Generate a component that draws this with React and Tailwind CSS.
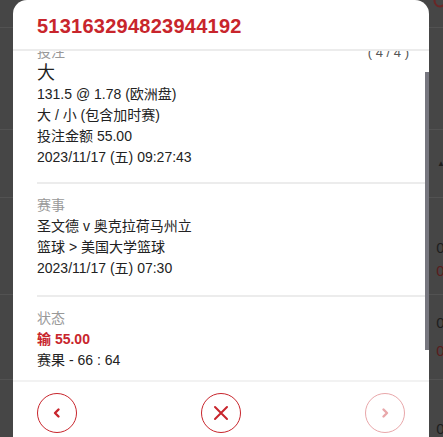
import React from 'react';

const font = { fontFamily: '"Liberation Sans", Arial, "Noto Sans CJK SC", sans-serif' };

function CircleButton({ children, faded }) {
  return (
    <button
      className={`w-10 h-10 rounded-full border border-[#c8252c] flex items-center justify-center text-[#c8252c] ${
        faded ? 'opacity-40' : ''
      }`}
    >
      {children}
    </button>
  );
}

function Section({ label, right, children, last, tight }) {
  return (
    <div
      className={`pt-[11px] ${tight ? 'pb-[14px]' : 'pb-[16px]'} ${last ? '' : 'border-b-2 border-[#ececec]'}`}
    >
      <div className="flex justify-between items-center h-[21px] pr-[16px]">
        <span className="text-[14px] text-[#999]">{label}</span>
        {right && <span className="text-[13px] text-[#555]">{right}</span>}
      </div>
      {children}
    </div>
  );
}

export default function App() {
  return (
    <div className="relative w-[443px] h-[437px] overflow-hidden bg-[#464646]" style={font}>
      {/* Page behind the overlay */}
      <div className="absolute inset-0">
        <div className="h-[28px] border-b border-[#525252] flex justify-end">
          <svg width="18" height="18" viewBox="0 0 18 18" className="-mt-[6px] -mr-[8px]">
            <circle cx="7" cy="7" r="5.5" fill="none" stroke="#6a2626" strokeWidth="2" />
            <path d="M11 11 L16 16" stroke="#6a2626" strokeWidth="2" />
          </svg>
        </div>
        <div className="h-[102px] border-b border-[#525252]" />
        <div className="h-[68px] border-b border-[#525252] flex justify-end items-center">
          <span className="text-[#1e1e1e] text-[8px] mr-[-2px]">▲</span>
        </div>
        <div className="h-[97px] border-b border-[#525252] flex flex-col items-end justify-end pb-[12px] text-[15px] leading-[23px]">
          <span className="text-[#1e1e1e] mr-[-10px]">00</span>
          <span className="text-[#5a1c1c] mr-[-10px]">00</span>
        </div>
        <div className="h-[85px] border-b border-[#525252] flex flex-col items-end justify-center text-[15px] leading-[28px]">
          <span className="text-[#1e1e1e] mr-[-10px]">00</span>
          <span className="text-[#5a1c1c] mr-[-10px]">00</span>
        </div>
        <div className="flex justify-end pt-[38px] text-[15px]">
          <span className="text-[#1e1e1e] mr-[-10px]">00</span>
        </div>
      </div>

      {/* Modal */}
      <div className="absolute left-[13px] top-0 w-[416px] h-[460px] bg-white rounded-t-[14px] flex flex-col">
        <div className="h-[51px] shrink-0 border-b-2 border-[#ececec] flex items-center pl-[24px] pt-[2px]">
          <h1 className="text-[20px] font-bold text-[#c8252c] tracking-[0.25px]">513163294823944192</h1>
        </div>

        {/* Scrollable body */}
        <div className="h-[329px] shrink-0 flex overflow-hidden">
          <div className="flex-1 pl-[24px] -mt-[20px] text-[14px] text-[#222] leading-[21px]">
            <Section label="投注" right="( 4 / 4 )" tight>
              <div className="text-[18px] leading-[21px]">大</div>
              <div>131.5 @ 1.78 (欧洲盘)</div>
              <div>大 / 小 (包含加时赛)</div>
              <div>投注金额 55.00</div>
              <div>2023/11/17 (五) 09:27:43</div>
            </Section>
            <Section label="赛事">
              <div>圣文德 v 奥克拉荷马州立</div>
              <div>篮球 &gt; 美国大学篮球</div>
              <div>2023/11/17 (五) 07:30</div>
            </Section>
            <Section label="状态" last>
              <div className="text-[#c8252c] font-bold">输 55.00</div>
              <div>赛果 - 66 : 64</div>
            </Section>
          </div>
          <div className="w-[4px] pt-[21px] pb-[30px] flex">
            <div className="flex-1 bg-[#76767e]" />
          </div>
        </div>

        {/* Footer */}
        <div className="border-t-2 border-[#f2f2f2] flex justify-between px-[24px] pt-[11px]">
          <CircleButton>
            <svg width="14" height="14" viewBox="0 0 14 14">
              <path d="M8.5 3.5 L5 7 L8.5 10.5" fill="none" stroke="currentColor" strokeWidth="2.4" strokeLinecap="round" strokeLinejoin="round" />
            </svg>
          </CircleButton>
          <CircleButton>
            <svg width="18" height="18" viewBox="0 0 18 18">
              <path d="M3 3 L15 15 M15 3 L3 15" fill="none" stroke="currentColor" strokeWidth="2" strokeLinecap="round" />
            </svg>
          </CircleButton>
          <CircleButton faded>
            <svg width="14" height="14" viewBox="0 0 14 14">
              <path d="M5.5 3.5 L9 7 L5.5 10.5" fill="none" stroke="currentColor" strokeWidth="2.4" strokeLinecap="round" strokeLinejoin="round" />
            </svg>
          </CircleButton>
        </div>
      </div>
    </div>
  );
}
